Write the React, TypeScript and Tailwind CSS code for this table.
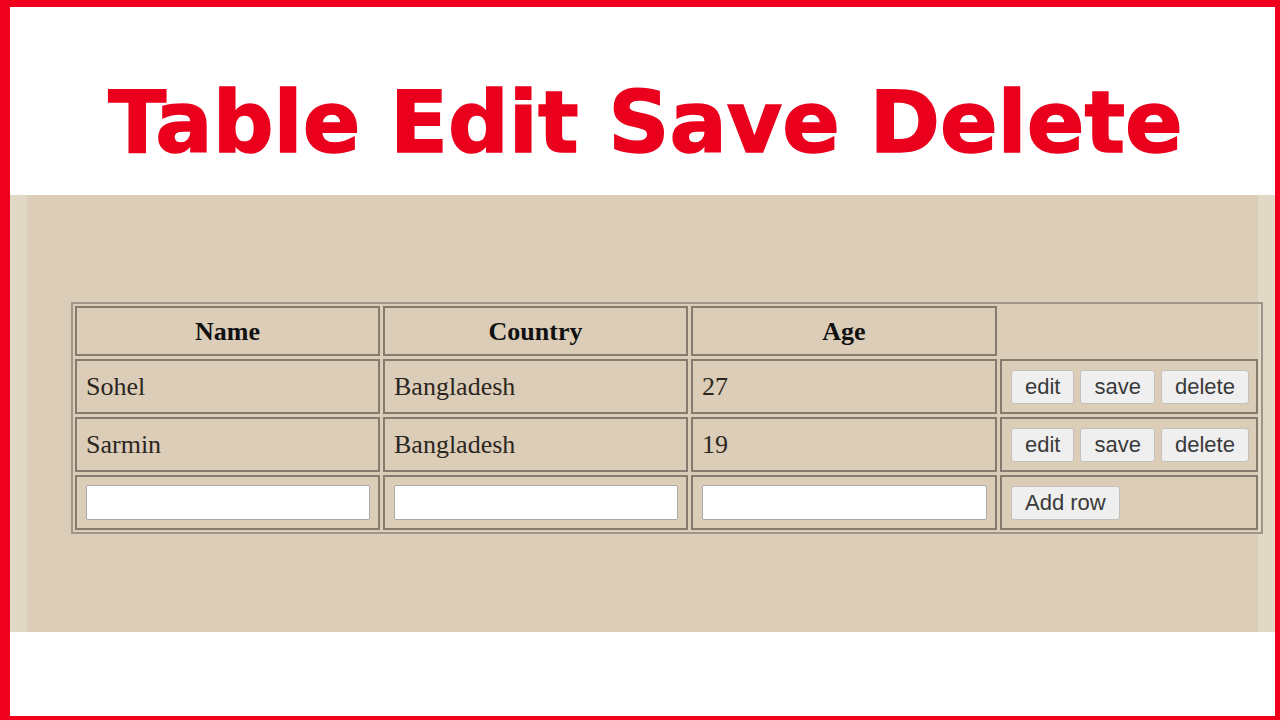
import { useState } from 'react';

type Row = { name: string; country: string; age: string };

export default function App() {
  const [rows] = useState<Row[]>([
    { name: 'Sohel', country: 'Bangladesh', age: '27' },
    { name: 'Sarmin', country: 'Bangladesh', age: '19' },
  ]);

  return (
    <div className="w-[1280px] h-[720px] bg-white border-l-[10px] border-t-[7px] border-r-[5px] border-b-[4px] border-[#f0001c] overflow-hidden">
      {/* Title */}
      <div className="h-[188px] pt-[73px] pl-[6px] text-center">
        <h1 className="text-[85px] leading-none font-bold text-[#ea001d] [-webkit-text-stroke:1.5px_#ea001d] font-['DejaVu_Sans',sans-serif]">
          Table Edit Save Delete
        </h1>
      </div>

      {/* Table panel */}
      <div className="h-[437px] bg-[#e2d8c6] px-[17px]">
        <div className="h-full bg-[#dccdb9] pt-[107px] pl-[44px]">
          <div className="w-[1192px] border-2 border-[#a0968a] p-[2px] font-['Liberation_Serif',serif] text-[26px] text-[#2b2620]">
            <div className="grid grid-cols-[305px_305px_306px_258px] grid-rows-[50px_55px_55px_55px] gap-[3px]">
              <HeadCell>Name</HeadCell>
              <HeadCell>Country</HeadCell>
              <HeadCell>Age</HeadCell>
              <div />

              {rows.map((r) => (
                <RowCells key={r.name} row={r} />
              ))}

              <Cell>
                <TextInput />
              </Cell>
              <Cell>
                <TextInput />
              </Cell>
              <Cell>
                <TextInput />
              </Cell>
              <Cell>
                <Button>Add row</Button>
              </Cell>
            </div>
          </div>
        </div>
      </div>
    </div>
  );
}

function RowCells({ row }: { row: Row }) {
  return (
    <>
      <Cell>{row.name}</Cell>
      <Cell>{row.country}</Cell>
      <Cell>{row.age}</Cell>
      <Cell>
        <div className="flex gap-[6px]">
          <Button>edit</Button>
          <Button>save</Button>
          <Button>delete</Button>
        </div>
      </Cell>
    </>
  );
}

function HeadCell({ children }: { children: React.ReactNode }) {
  return (
    <div className="flex items-center justify-center border-2 border-[#857b6e] font-bold text-[#111]">
      {children}
    </div>
  );
}

function Cell({ children }: { children: React.ReactNode }) {
  return (
    <div className="flex items-center border-2 border-[#857b6e] pl-[9px] pr-[8px]">
      {children}
    </div>
  );
}

function TextInput() {
  return (
    <input
      type="text"
      className="w-full h-[35px] bg-white border border-[#a9a9a9] rounded-[2px] outline-none"
    />
  );
}

function Button({ children }: { children: React.ReactNode }) {
  return (
    <button className="h-[34px] px-[13px] bg-[#efefef] border border-[#c4c0ba] rounded-[3px] font-['Liberation_Sans',sans-serif] text-[22px] leading-none text-[#3a3a3a]">
      {children}
    </button>
  );
}
